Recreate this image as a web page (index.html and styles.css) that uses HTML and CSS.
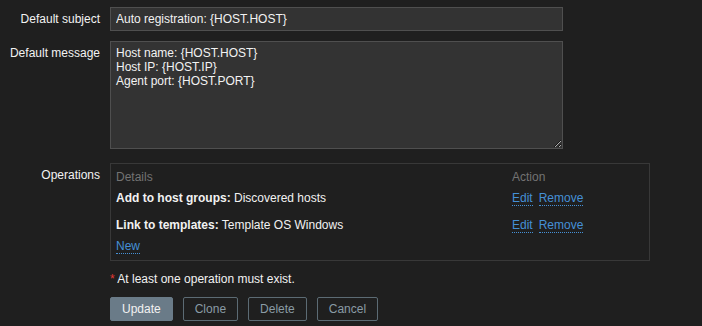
FILE: index.html
```html
<!DOCTYPE html>
<html lang="en">
<head>
  <meta charset="UTF-8">
  <title>Auto registration action</title>
  <link rel="stylesheet" href="styles.css">
</head>
<body>
  <form class="action-form">
    <div class="form-row">
      <label class="form-label label-subject" for="subject">Default subject</label>
      <div class="form-field">
        <input type="text" id="subject" class="text-input" value="Auto registration: {HOST.HOST}">
      </div>
    </div>

    <div class="form-row row-message">
      <label class="form-label label-message" for="message">Default message</label>
      <div class="form-field">
        <textarea id="message" class="text-area">Host name: {HOST.HOST}
Host IP: {HOST.IP}
Agent port: {HOST.PORT}</textarea>
      </div>
    </div>

    <div class="form-row row-operations">
      <div class="form-label label-operations">Operations</div>
      <div class="form-field">
        <div class="operations">
          <div class="op-row op-header">
            <span>Details</span>
            <span>Action</span>
          </div>
          <div class="op-row op-first">
            <span><b>Add to host groups:</b> Discovered hosts</span>
            <span class="op-links"><a href="#">Edit</a><a href="#">Remove</a></span>
          </div>
          <div class="op-row op-second">
            <span><b>Link to templates:</b> Template OS Windows</span>
            <span class="op-links"><a href="#">Edit</a><a href="#">Remove</a></span>
          </div>
          <div class="op-new"><a href="#">New</a></div>
        </div>
      </div>
    </div>

    <div class="form-row row-note">
      <div class="form-label"></div>
      <div class="form-field note"><span class="asterisk">*</span> At least one operation must exist.</div>
    </div>

    <div class="form-row row-buttons">
      <div class="form-label"></div>
      <div class="form-field buttons">
        <button type="button" class="btn btn-main">Update</button>
        <button type="button" class="btn btn-alt">Clone</button>
        <button type="button" class="btn btn-alt">Delete</button>
        <button type="button" class="btn btn-alt">Cancel</button>
      </div>
    </div>
  </form>
</body>
</html>
```

FILE: styles.css
```css
html, body {
  margin: 0;
  background: #1f1f1f;
}

body {
  font-family: "Liberation Sans", Arial, sans-serif;
  font-size: 12px;
  line-height: 14px;
  color: #f2f2f2;
}

.action-form {
  padding-top: 7px;
}

.form-row {
  display: grid;
  grid-template-columns: 100px 1fr;
  column-gap: 10px;
}

.form-label {
  text-align: right;
}

.label-subject {
  padding-top: 5px;
}

.label-message {
  padding-top: 5px;
}

.label-operations {
  padding-top: 5px;
}

.text-input,
.text-area {
  box-sizing: border-box;
  width: 453px;
  margin: 0;
  background: #333333;
  border: 1px solid #4f4f4f;
  color: #f2f2f2;
  font-family: inherit;
  font-size: 12px;
  line-height: 14px;
  outline: none;
}

.text-input {
  height: 24px;
  padding: 0 5px;
  display: block;
}

.row-message {
  margin-top: 10px;
}

.text-area {
  display: block;
  height: 108px;
  padding: 4px 5px;
  resize: vertical;
}

.row-operations {
  margin-top: 14px;
}

.operations {
  box-sizing: border-box;
  width: 540px;
  border: 1px solid #383838;
  padding: 6px 5px 7px;
}

.op-row {
  display: grid;
  grid-template-columns: 1fr 132px;
}

.op-header {
  color: #737373;
}

.op-first {
  margin-top: 7px;
}

.op-second {
  margin-top: 12px;
}

.op-new {
  margin-top: 6px;
}

.op-links {
  display: flex;
  gap: 6px;
}

a {
  color: #4590d6;
  text-decoration: none;
  border-bottom: 1px dotted #4590d6;
}

.row-note {
  margin-top: 11px;
}

.asterisk {
  color: #e33734;
}

.row-buttons {
  margin-top: 11px;
}

.buttons {
  display: flex;
  gap: 10px;
}

.btn {
  box-sizing: border-box;
  height: 24px;
  padding: 0 11px;
  border-radius: 2px;
  font-family: inherit;
  font-size: 12px;
  line-height: 14px;
}

.btn-main {
  background: #6a7b88;
  border: 1px solid #6a7b88;
  color: #f2f2f2;
}

.btn-alt {
  background: transparent;
  border: 1px solid #5c6b74;
  color: #8a9ba5;
}
```
